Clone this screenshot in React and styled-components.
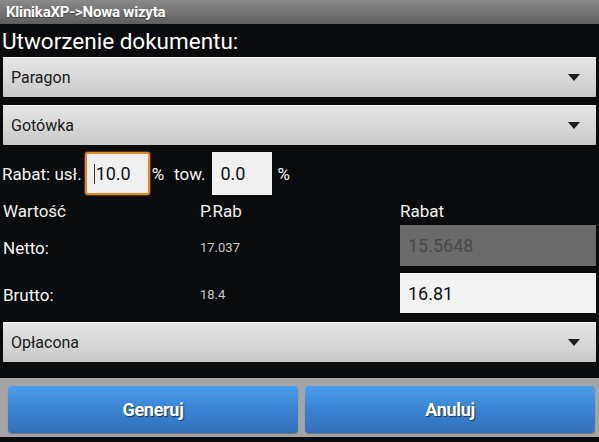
import React from "react";
import styled, { createGlobalStyle } from "styled-components";

const Global = createGlobalStyle`
  html, body {
    margin: 0;
    padding: 0;
    background: #0a0b0d;
  }
  * { box-sizing: border-box; }
`;

const Screen = styled.div`
  width: 599px;
  height: 442px;
  background: #0a0b0d;
  display: flex;
  flex-direction: column;
  font-family: Roboto, "Liberation Sans", sans-serif;
  color: #fff;
  overflow: hidden;
`;

const TitleBar = styled.div`
  height: 24px;
  flex-shrink: 0;
  display: flex;
  align-items: center;
  padding-left: 6px;
  background: linear-gradient(#8a8a8a, #5e5e5e);
  font-size: 15px;
  font-weight: 700;
  letter-spacing: -0.2px;
  text-shadow: 0 1px 1px rgba(0, 0, 0, 0.4);
`;

const Heading = styled.div`
  font-size: 22.5px;
  line-height: 28px;
  margin: 3px 0 2px 2px;
`;

const Spinner = styled.div`
  height: 40px;
  flex-shrink: 0;
  margin: ${(p) => p.$mt || 0}px 3px 0 3px;
  display: flex;
  align-items: center;
  justify-content: space-between;
  padding: 0 16px 0 8px;
  background: linear-gradient(#e4e4e4, #d8d8d8 50%, #c9c9c9);
  border-radius: 1px;
  box-shadow: inset 0 1px 0 #f2f2f2;
  color: #1a1a1a;
  font-size: 16px;
`;

const Arrow = styled.span`
  width: 0;
  height: 0;
  border-left: 6px solid transparent;
  border-right: 6px solid transparent;
  border-top: 7px solid #1c1c1c;
`;

const RabatRow = styled.div`
  display: flex;
  align-items: center;
  margin: 7px 0 0 2px;
  height: 43px;
  font-size: 17px;
  color: #f4f4f4;
`;

const Unit = styled.span`
  margin-left: ${(p) => p.$ml || 0}px;
`;

const SmallInput = styled.div`
  width: ${(p) => p.$w}px;
  height: 43px;
  margin-left: ${(p) => p.$ml || 0}px;
  display: flex;
  align-items: center;
  padding-left: ${(p) => (p.$focused ? 7 : 8)}px;
  background: #f0f0f0;
  color: #111;
  font-size: 18px;
  border: ${(p) => (p.$focused ? "2px solid #e8892c" : "none")};
  border-radius: ${(p) => (p.$focused ? "3px" : "0")};
  box-shadow: ${(p) => (p.$focused ? "0 0 2px #f0a050" : "none")};
`;

const Caret = styled.span`
  width: 1px;
  height: 20px;
  background: #333;
  margin-right: 1px;
`;

const Grid = styled.div`
  display: grid;
  grid-template-columns: 197px 200px 1fr;
  grid-template-rows: 28px 48px 40px;
  margin: 2px 3px 0 3px;
  align-items: center;
`;

const ColHead = styled.div`
  font-size: 17px;
  color: #f2f2f2;
  line-height: 20px;
  align-self: start;
  padding-top: 4px;
`;

const RowLabel = styled.div`
  font-size: 17px;
  color: #f4f4f4;
  margin-top: ${(p) => p.$mt || 0}px;
`;

const Value = styled.div`
  font-size: 13px;
  color: #c8c8c8;
  margin-top: ${(p) => p.$mt || 0}px;
`;

const Field = styled.div`
  height: ${(p) => p.$h}px;
  align-self: start;
  display: flex;
  align-items: center;
  padding-left: 8px;
  font-size: 18px;
  background: ${(p) => (p.$disabled ? "#6a6a6a" : "#f2f2f2")};
  color: ${(p) => (p.$disabled ? "#4a4a4a" : "#111")};
`;

const BottomBar = styled.div`
  margin: 16px 0 5px 0;
  height: 59px;
  flex-shrink: 0;
  background: #a4a4a4;
  display: flex;
  gap: 7px;
  padding: 8px 4px 4px 8px;
`;

const Button = styled.div`
  flex: 1;
  display: flex;
  align-items: center;
  justify-content: center;
  border-radius: 4px;
  background: linear-gradient(#4b9fea, #3a82d2 50%, #3470bb);
  color: #fff;
  font-size: 18px;
  font-weight: 700;
  letter-spacing: -0.3px;
  text-shadow: 1px 1px 1px rgba(0, 0, 0, 0.6);
  box-shadow: 0 1px 1px rgba(0, 0, 0, 0.3);
`;

export default function App() {
  return (
    <>
      <Global />
      <Screen>
        <TitleBar>KlinikaXP-&gt;Nowa wizyta</TitleBar>
        <Heading>Utworzenie dokumentu:</Heading>
        <Spinner>
          <span>Paragon</span>
          <Arrow />
        </Spinner>
        <Spinner $mt={8}>
          <span>Gotówka</span>
          <Arrow />
        </Spinner>
        <RabatRow>
          <span>Rabat: usł.</span>
          <SmallInput $w={65} $ml={3} $focused>
            <Caret />
            10.0
          </SmallInput>
          <Unit $ml={2}>%</Unit>
          <Unit $ml={10}>tow.</Unit>
          <SmallInput $w={60} $ml={7}>
            0.0
          </SmallInput>
          <Unit $ml={5}>%</Unit>
        </RabatRow>
        <Grid>
          <ColHead>Wartość</ColHead>
          <ColHead>P.Rab</ColHead>
          <ColHead>Rabat</ColHead>
          <RowLabel $mt={-2}>Netto:</RowLabel>
          <Value $mt={-3}>17.037</Value>
          <Field $h={41} $disabled>15.5648</Field>
          <RowLabel $mt={3}>Brutto:</RowLabel>
          <Value $mt={3}>18.4</Value>
          <Field $h={40}>16.81</Field>
        </Grid>
        <Spinner $mt={9}>
          <span>Opłacona</span>
          <Arrow />
        </Spinner>
        <BottomBar>
          <Button>Generuj</Button>
          <Button>Anuluj</Button>
        </BottomBar>
      </Screen>
    </>
  );
}
